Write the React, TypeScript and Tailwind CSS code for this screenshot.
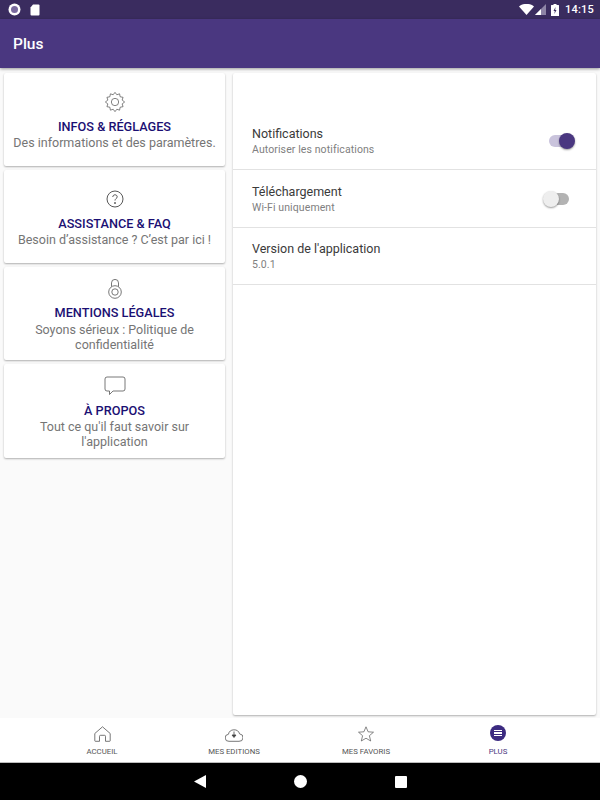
import React from 'react'

const cards = [
  { title: 'INFOS & RÉGLAGES', text: 'Des informations et des paramètres.', icon: 'gear' },
  { title: 'ASSISTANCE & FAQ', text: 'Besoin d’assistance ? C’est par ici !', icon: 'help' },
  { title: 'MENTIONS LÉGALES', text: 'Soyons sérieux : Politique de confidentialité', icon: 'lock' },
  { title: 'À PROPOS', text: "Tout ce qu'il faut savoir sur l'application", icon: 'chat' },
]

const gearPath =
  'M12 1.5l2 2.6 3-1 .6 3.2 3.2.6-1 3 2.7 2.1-2.7 2.1 1 3-3.2.6-.6 3.2-3-1-2 2.6-2-2.6-3 1-.6-3.2-3.2-.6 1-3L1.5 12l2.7-2.1-1-3 3.2-.6.6-3.2 3 1z'

const CardIcon = ({ name }: { name: string }) => {
  if (name === 'gear') {
    return (
      <svg width="22" height="22" viewBox="0 0 24 24" fill="none" stroke="#555" strokeWidth="0.8" strokeLinejoin="round">
        <path d={gearPath} />
        <circle cx="12" cy="12" r="4" />
      </svg>
    )
  }
  if (name === 'help') {
    return (
      <svg width="18" height="18" viewBox="0 0 18 18" fill="none" stroke="#444" strokeWidth="0.9">
        <circle cx="9" cy="9" r="8" />
        <path d="M6.8 7c0-1.400 1-2.200 2.200-2.200s2.200.8 2.200 2c0 1.700-2.200 1.800-2.200 3.700" />
        <circle cx="9" cy="13" r=".5" fill="#444" />
      </svg>
    )
  }
  if (name === 'lock') {
    return (
      <svg width="14" height="20" viewBox="0 0 14 20" fill="none" stroke="#555" strokeWidth="0.8">
        <path d="M3.500 7.500V3.900a3.500 3.500 0 0 1 7 0v3.600" />
        <circle cx="7" cy="13" r="6.300" />
        <circle cx="7" cy="13" r="3.200" />
      </svg>
    )
  }
  return (
    <svg width="22" height="20" viewBox="0 0 22 20" fill="none" stroke="#555" strokeWidth="0.8" strokeLinejoin="round">
      <path d="M3 1h16a2 2 0 0 1 2 2v10a2 2 0 0 1-2 2H9l-3.500 3.500V15H3a2 2 0 0 1-2-2V3a2 2 0 0 1 2-2z" />
    </svg>
  )
}

const Toggle = ({ on }: { on: boolean }) => (
  <div className={on ? 'relative h-[12px] w-[25px] rounded-full bg-[#c9c3dc]' : 'relative mr-[5px] h-[12px] w-[23px] rounded-full bg-[#b3b3b3]'}>
    <div
      className={
        on
          ? 'absolute right-[-1px] top-[-2px] h-[16px] w-[16px] rounded-full bg-[#4a3780] shadow-[0_1px_2px_rgba(0,0,0,0.4)]'
          : 'absolute left-[-3px] top-[-2px] h-[16px] w-[16px] rounded-full bg-[#eeeeee] shadow-[0_1px_2px_rgba(0,0,0,0.4)]'
      }
    />
  </div>
)

const SettingRow = ({ title, sub, toggle }: { title: string; sub: string; toggle?: boolean }) => (
  <div className="flex h-[58px] items-center justify-between border-b border-[#e2e2e2] pl-[19px] pr-[22px] last:h-[57px]">
    <div className="pt-[2px]">
      <div className="text-[12.5px] leading-[16px] text-[#3a3a3a]">{title}</div>
      <div className="text-[10.5px] leading-[16px] tracking-[0.1px] text-[#808080]">{sub}</div>
    </div>
    {toggle !== undefined && <Toggle on={toggle} />}
  </div>
)

const NavItem = ({ label, active, children }: { label: string; active?: boolean; children: React.ReactNode }) => (
  <div className="flex flex-1 flex-col items-center">
    <div className="flex h-[20px] items-center justify-center">{children}</div>
    <div className={active ? 'mt-[2px] text-[7.8px] leading-[12px] text-[#4a3780]' : 'mt-[2px] text-[7.8px] leading-[12px] text-[#555555]'}>
      {label}
    </div>
  </div>
)

export default function App() {
  return (
    <div className="flex h-[800px] w-[600px] flex-col overflow-hidden bg-[#fafafa] font-['Roboto',sans-serif]">
      {/* barre de statut */}
      <div className="flex h-[19px] shrink-0 items-center justify-between bg-[#3a2c5f] pl-[8px] pr-[6px]">
        <div className="flex items-center gap-[9px]">
          <svg width="13" height="13" viewBox="0 0 13 13">
            <circle cx="6.500" cy="6.500" r="6" fill="#fff" />
            <circle cx="6.500" cy="6.500" r="3.500" fill="#7a6a9f" />
          </svg>
          <svg width="10" height="12" viewBox="0 0 10 12">
            <path d="M3 .5h5.500a1 1 0 0 1 1 1v9a1 1 0 0 1-1 1h-7a1 1 0 0 1-1-1V3.500z" fill="#fff" />
          </svg>
        </div>
        <div className="flex items-center">
          <svg width="15" height="11" viewBox="0 0 15 11">
            <path d="M0 2.500C4-1 11-1 15 2.500L7.500 11z" fill="#fff" />
          </svg>
          <svg width="11" height="11" viewBox="0 0 11 11" className="ml-[1px]">
            <path d="M11 0v11H0z" fill="#8d84a6" />
            <path d="M6 5v6H0z" fill="#fff" />
          </svg>
          <svg width="8" height="12" viewBox="0 0 8 12" className="ml-[5px]">
            <path d="M2.500 0h3v1H7.500a.5.5 0 0 1 .5.5V12H0V1.500A.5.5 0 0 1 .5 1h2z" fill="#fff" />
            <path d="M4.500 3L2.500 7h1.300L3.400 10l2.100-4H4.200z" fill="#3a2c5f" />
          </svg>
          <span className="ml-[6px] text-[11px] font-medium leading-[19px] tracking-[0.2px] text-white">14:15</span>
        </div>
      </div>

      {/* en-tête */}
      <div className="z-10 flex h-[49px] shrink-0 items-center bg-[#4a3780] pl-[13px] pt-[2px] shadow-[0_1px_3px_rgba(0,0,0,0.4)]">
        <span className="text-[15.5px] font-medium text-white">Plus</span>
      </div>

      <div className="flex min-h-0 flex-1 gap-[8px] pb-[3px] pl-[4px] pr-[4px] pt-[5px]">
        {/* colonne gauche */}
        <div className="flex w-[221px] shrink-0 flex-col gap-[4px]">
          {cards.map((card) => (
            <div
              key={card.title}
              className="flex h-[93px] flex-col items-center justify-center rounded-[2px] bg-white px-[8px] pt-[2px] text-center shadow-[0_1px_2px_rgba(0,0,0,0.3)] last:h-[94px]"
            >
              <div className="flex h-[22px] items-center justify-center">
                <CardIcon name={card.icon} />
              </div>
              <div className="mt-[4.500px] text-[12.7px] font-medium leading-[17.500px] text-[#1b0f73]">{card.title}</div>
              <div className="text-[12.5px] leading-[15px] text-[#757575]">{card.text}</div>
            </div>
          ))}
        </div>

        {/* panneau des réglages */}
        <div className="flex-1 rounded-[2px] bg-white pt-[39px] shadow-[0_1px_2px_rgba(0,0,0,0.3)]">
          <SettingRow title="Notifications" sub="Autoriser les notifications" toggle={true} />
          <SettingRow title="Téléchargement" sub="Wi-Fi uniquement" toggle={false} />
          <SettingRow title="Version de l'application" sub="5.0.1" />
        </div>
      </div>

      {/* navigation du bas */}
      <div className="flex h-[44px] shrink-0 bg-white px-[36px] pt-[6px]">
        <NavItem label="ACCUEIL">
          <svg width="17" height="16" viewBox="0 0 17 16" fill="none" stroke="#555" strokeWidth="0.8" strokeLinejoin="round">
            <path d="M.8 7.500L8.500.8l7.700 6.700v7.200a.6.6 0 0 1-.6.6H11.500v-5a1 1 0 0 0-1-1h-4a1 1 0 0 0-1 1v5H1.400a.6.6 0 0 1-.6-.6z" />
          </svg>
        </NavItem>
        <NavItem label="MES EDITIONS">
          <svg width="18" height="15" viewBox="0 0 18 15" fill="none" stroke="#555" strokeWidth="0.8" strokeLinejoin="round">
            <path d="M4 14.300a3.500 3.500 0 0 1-.6-7 5.800 5.800 0 0 1 11.200-.4 3.700 3.700 0 0 1-.6 7.400z" />
            <path d="M9 4.500v4M7 8l2 2.500L11 8z" fill="#444" stroke="#444" />
          </svg>
        </NavItem>
        <NavItem label="MES FAVORIS">
          <svg width="16" height="16" viewBox="0 0 16 16" fill="none" stroke="#555" strokeWidth="0.7" strokeLinejoin="round">
            <path d="M8 .8l2.100 5 5.400.4-4.100 3.500 1.300 5.300L8 12.200 3.300 15l1.300-5.300L.5 6.200l5.400-.4z" />
          </svg>
        </NavItem>
        <NavItem label="PLUS" active>
          <div className="mb-[2px] flex h-[16px] w-[16px] flex-col items-center justify-center gap-[1px] rounded-full bg-[#3b2a80]">
            <div className="h-[1.500px] w-[8px] bg-white" />
            <div className="h-[1.500px] w-[8px] bg-white" />
            <div className="h-[1.500px] w-[8px] bg-white" />
          </div>
        </NavItem>
      </div>

      {/* barre système */}
      <div className="flex h-[38px] shrink-0 items-center justify-center gap-[88px] border-t border-[#bdbdbd] bg-black">
        <svg width="12" height="13" viewBox="0 0 12 13">
          <path d="M12 0v13L0 6.500z" fill="#fff" />
        </svg>
        <div className="h-[13px] w-[13px] rounded-full bg-white" />
        <div className="h-[12px] w-[12px] rounded-[1px] bg-white" />
      </div>
    </div>
  )
}
